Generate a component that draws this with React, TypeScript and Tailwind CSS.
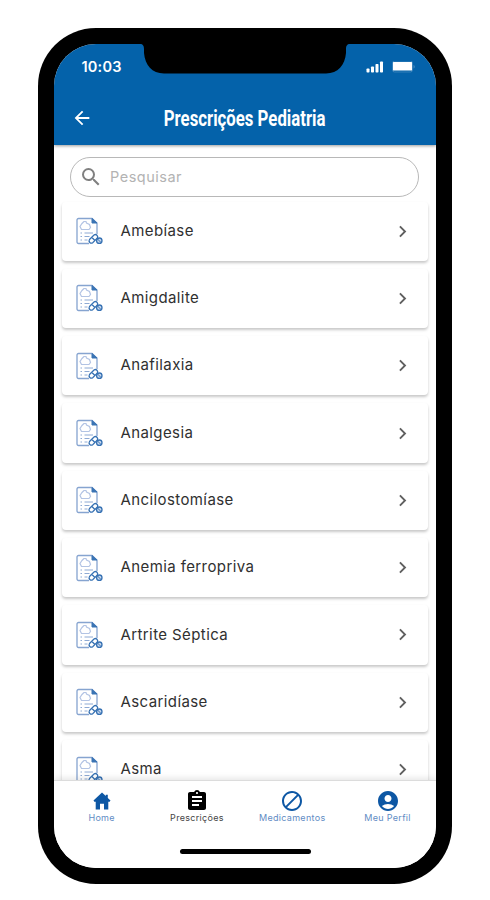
import React from 'react';
import { MdArrowBack, MdSearch, MdChevronRight, MdAssignment, MdBlock, MdAccountCircle } from 'react-icons/md';

const prescriptions = [
    'Amebíase',
    'Amigdalite',
    'Anafilaxia',
    'Analgesia',
    'Ancilostomíase',
    'Anemia ferropriva',
    'Artrite Séptica',
    'Ascaridíase',
    'Asma',
];

const HomeIcon: React.FC = () => (
    <svg width="18" height="18" viewBox="0 0 18 18" fill="currentColor">
        <path d="M9 .5 12.8 4V2.8h2v3.100L17.500 8.600l-.8 1.200H15.300v7.700H11v-5.700H7v5.700H2.700V9.800H1.300L.5 8.600Z" />
    </svg>
);

const PrescriptionIcon: React.FC = () => (
    <svg width="28" height="28" viewBox="0 0 28 28" fill="none" stroke="#3a74b4" strokeWidth="1" className="shrink-0">
        <path d="M14 26.5H3.500a1.500 1.500 0 0 1-1.500-1.500v-22a1.500 1.500 0 0 1 1.500-1.500H17l5 4.500v11" stroke="#86a4d0" strokeWidth="1.300" />
        <path d="M17 1.500v4.500h5Z" fill="#3a74b4" />
        <path d="M9 4.500 7 6.500l-2 3 1.500 3h7.500l1.500-2-1-3-3-1.500L11 4.500Z" stroke="#b3c4e4" strokeWidth="1.200" />
        <path d="M5.500 16H7M5.500 19.500H7M5.500 23H7M9.500 16H18M9.500 19.500h5M9.500 23h3" stroke="#8eaad4" />
        <path d="m14.500 22.500 4.500-4.500a2.300 2.300 0 0 1 3.200 3.200l-4.500 4.500a2.300 2.300 0 0 1-3.200-3.200ZM16.700 20.300l3.200 3.200" stroke="#3671b3" strokeWidth="1.300" />
        <circle cx="24.300" cy="23.700" r="2.700" stroke="#3671b3" strokeWidth="1.300" fill="#c9d9ee" />
        <path d="m22.500 22 3.600 3.600" stroke="#3671b3" />
    </svg>
);

const Notch: React.FC = () => (
    <svg className="absolute left-[86px] top-0" width="210" height="30" viewBox="0 0 210 30">
        <path d="M0 0c3 0 4 2 4 5v4c1 12 8 20.500 20 20.500h162c12 0 19-8.500 20-20.500V5c0-3 1-5 4-5Z" fill="#000" />
    </svg>
);

const StatusBar: React.FC = () => (
    <div className="flex h-[46px] items-center justify-between pl-[27.500px] pr-[21px]">
        <span className="font-['Inter'] text-[14.5px] font-semibold tracking-[0.2px]">10:03</span>
        <div className="flex items-center gap-[8px]">
            <svg width="18" height="12" viewBox="0 0 18 12" fill="currentColor">
                <rect x="0.500" y="7.500" width="3" height="4" rx="0.800" />
                <rect x="5" y="5.500" width="3" height="6" rx="0.800" />
                <rect x="9.500" y="3" width="3" height="8.500" rx="0.800" />
                <rect x="14" y="0.500" width="3" height="11" rx="0.800" />
            </svg>
            <svg width="23" height="12" viewBox="0 0 23 12">
                <rect x="0.500" y="0" width="20" height="11" rx="2" fill="none" stroke="#fff" strokeOpacity="0.200" />
                <rect x="1" y="1" width="19" height="8.500" rx="0.500" fill="#fff" />
                <path d="M21.500 4v3.500c1-.3 1.300-1 1.300-1.750s-.3-1.450-1.300-1.750Z" fill="#fff" fillOpacity="0.250" />
            </svg>
        </div>
    </div>
);

const Header: React.FC = () => (
    <header className="relative z-10 h-[101px] shrink-0 bg-[#0462aa] text-white shadow-[0_1px_3px_rgba(0,0,0,0.4)]">
        <Notch />
        <StatusBar />
        <div className="grid h-[56px] grid-cols-[56px_1fr_56px] items-center">
            <MdArrowBack className="ml-[17px] size-[22px]" />
            <h1 className="origin-center scale-x-[0.780] justify-self-center whitespace-nowrap pt-[3px] font-['Roboto'] text-[21.5px] font-bold">
                Prescrições Pediatria
            </h1>
        </div>
    </header>
);

const SearchBar: React.FC = () => (
    <div className="mx-4 mt-3 flex h-10 w-[349px] shrink-0 items-center rounded-full border border-[#b8b8b8] pl-[8px]">
        <MdSearch className="size-[24px] text-[#808080]" />
        <span className="ml-[7px] font-['Inter'] text-[14.5px] tracking-[0.5px] text-[#b3b3b3]">Pesquisar</span>
    </div>
);

const PrescriptionCard: React.FC<{ name: string }> = ({ name }) => (
    <li className="flex h-[59.3px] shrink-0 items-center rounded-[4px] bg-white pl-[13px] pr-[14px] shadow-[0_2px_3px_rgba(0,0,0,0.22)]">
        <PrescriptionIcon />
        <span className="ml-[17.5px] flex-1 font-['Inter'] text-[15px] tracking-[0.4px] text-[#303030]">{name}</span>
        <MdChevronRight className="size-[23px] text-[#606060]" />
    </li>
);

interface NavItemProps {
    label: string;
    icon: React.ReactNode;
    active?: boolean;
}

const NavItem: React.FC<NavItemProps> = ({ label, icon, active }) => (
    <div className={`flex w-[95.3px] flex-col items-center ${active ? 'text-black' : 'text-[#0d57a4]'}`}>
        <div className="flex h-6 items-center">{icon}</div>
        <span className={`-mt-px whitespace-nowrap font-['Inter'] text-[9px] leading-[12px] tracking-[0.3px] ${active ? 'text-[#444]' : 'text-[#5f8cc4]'}`}>
            {label}
        </span>
    </div>
);

const BottomNav: React.FC = () => (
    <nav className="relative z-10 h-[88px] shrink-0 border-t border-[#dcdcdc] bg-white shadow-[0_-2px_6px_rgba(0,0,0,0.1)]">
        <div className="flex pt-2">
            <NavItem label="Home" icon={<HomeIcon />} />
            <NavItem label="Prescrições" icon={<MdAssignment className="size-[24px]" />} active />
            <NavItem label="Medicamentos" icon={<MdBlock className="size-[24px]" />} />
            <NavItem label="Meu Perfil" icon={<MdAccountCircle className="size-[24px]" />} />
        </div>
        <div className="mx-auto mt-[25px] h-[5px] w-[131px] rounded-full bg-black" />
    </nav>
);

export default function App() {
    return (
        <div className="flex h-[900px] w-[490px] items-start bg-white pl-[38px] pt-7">
            <div className="h-[856px] w-[414px] rounded-[58px] bg-black p-4">
                <div className="flex h-full flex-col overflow-hidden rounded-[42px] bg-white">
                    <Header />
                    <SearchBar />
                    <ul className="flex min-h-0 flex-1 flex-col gap-2 overflow-hidden px-2 pt-[4.5px]">
                        {prescriptions.map((name) => (
                            <PrescriptionCard key={name} name={name} />
                        ))}
                    </ul>
                    <BottomNav />
                </div>
            </div>
        </div>
    );
}
